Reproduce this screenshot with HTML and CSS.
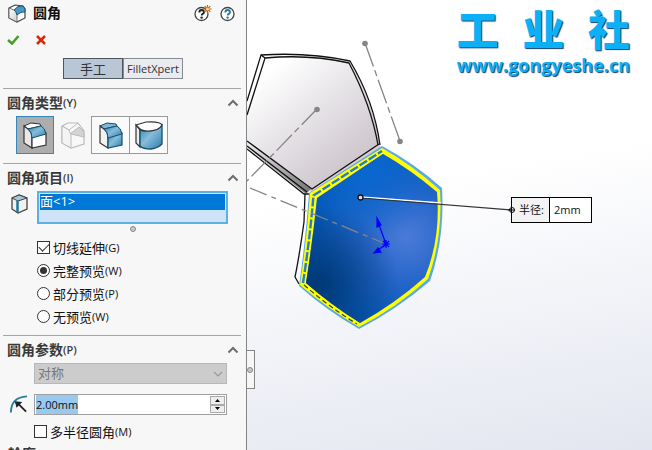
FILE: index.html
```html
<!DOCTYPE html>
<html lang="zh-CN">
<head>
<meta charset="utf-8">
<title>圆角</title>
<link rel="stylesheet" href="styles.css">
</head>
<body>
<svg class="defs" aria-hidden="true">
  <defs>
    <linearGradient id="blue" x1="0" y1="0" x2="1" y2="1"><stop offset="0" stop-color="#2f7fab"/><stop offset=".45" stop-color="#86bddb"/><stop offset="1" stop-color="#2f7ba6"/></linearGradient>
    <linearGradient id="gray" x1="0" y1="0" x2="1" y2="1"><stop offset="0" stop-color="#ffffff"/><stop offset="1" stop-color="#cfcfcf"/></linearGradient>
    <symbol id="chevron" viewBox="0 0 12 8"><path d="M1.500 6.500 6 2l4.500 4.500" fill="none" stroke="#6e6e6e" stroke-width="2"/></symbol>
  </defs>
</svg>
<div class="app">
  <aside class="panel">
    <header class="head">
      <svg class="head-icon" viewBox="0 0 18 19"><path d="M1 4 7 1l8 1 2 3v9l-8 4-8-4z" fill="#fbfbfb" stroke="#444" stroke-width="1.200"/><path d="M1 4l5 2q3 2 3 5v7l-8-4z" fill="url(#gray)" stroke="#555" stroke-width=".8"/><path d="M6 6 10 2.500 15 2l2 3v3q-4-1-8 3-1-4-3-5z" fill="#4a97bf" stroke="#1c5778"/></svg>
      <h1>圆角</h1>
      <button class="plain" aria-label="新增功能"><svg width="19" height="18" viewBox="0 0 19 18"><circle cx="7.500" cy="10" r="6.500" fill="#fff" stroke="#444" stroke-width="1.300"/><path d="M5.300 8.500q0-2.500 2.300-2.500t2.300 2.200q0 1-1.200 1.700-1 .6-1 1.600" fill="none" stroke="#222" stroke-width="1.900"/><circle cx="7.600" cy="13.600" r="1.200" fill="#222"/><path d="M13.500 1v8M9.500 5h8M10.700 2.200l5.600 5.600M16.300 2.200l-5.600 5.600" stroke="#b96610" stroke-width="1.200"/><circle cx="13.500" cy="5" r="1.500" fill="#ffd28a"/></svg></button>
      <button class="plain" aria-label="帮助"><svg width="15" height="18" viewBox="0 0 15 18"><circle cx="7.500" cy="10" r="6.500" fill="#fff" stroke="#444" stroke-width="1.300"/><path d="M5.300 8.500q0-2.500 2.300-2.500t2.300 2.200q0 1-1.200 1.700-1 .6-1 1.600" fill="none" stroke="#237ba8" stroke-width="1.900"/><circle cx="7.600" cy="13.600" r="1.200" fill="#237ba8"/></svg></button>
    </header>
    <div class="confirm">
      <button class="plain" aria-label="确定"><svg width="13" height="10" viewBox="0 0 13 10"><path d="M1 5l4 3.500L11.500 1" fill="none" stroke="#3fa31f" stroke-width="2.600"/></svg></button>
      <button class="plain" aria-label="取消"><svg width="10" height="10" viewBox="0 0 10 10"><path d="M1 1l8 8M9 1 1 9" stroke="#d42a06" stroke-width="2.500"/></svg></button>
    </div>
    <div class="tabs">
      <button class="tab tab-on">手工</button>
      <button class="tab">FilletXpert</button>
    </div>

    <section class="group">
      <h2>圆角类型<small>(Y)</small><svg class="chev"><use href="#chevron"/></svg></h2>
      <div class="types">
        <button class="type type-on" aria-label="恒定大小圆角"><svg viewBox="0 0 24 27"><path d="M1 4 8 1l9 1 1 2-13 3z" fill="#fff" stroke="#333"/><path d="M1 4l4 3q4 3 4 8v11l-8-5z" fill="#e8e8e8" stroke="#333" stroke-width="1.200"/><path d="M9 15l14-4v12L9 26z" fill="#fff" stroke="#333" stroke-width="1.200"/><path d="M5 7l13-3q4 2 5 8L9 16q0-6-4-9z" fill="url(#blue)" stroke="#15506f"/></svg></button>
        <button class="type type-off" aria-label="变量大小圆角" disabled><svg viewBox="0 0 24 27"><path d="M1 4 7 1l10 0 6 8v13L10 26l-9-5z" fill="#f8f8f8" stroke="#bbb" stroke-width="1.200"/><path d="M1 4l7 4 9-7" fill="none" stroke="#bbb"/><path d="M9 12 18 5l5 5v5l-13-3z" fill="#d4d4d4" stroke="#bbb"/><path d="M1 4l7 4 2 5v13l-9-5z" fill="#f3f3f3" stroke="#bbb"/></svg></button>
        <button class="type" aria-label="面圆角"><svg viewBox="0 0 24 27"><path d="M1 4 8 1l9 1 1 2-13 3z" fill="#7db9d6" stroke="#1d4a60"/><path d="M1 4l4 3q4 3 4 8v11l-8-5z" fill="#f2f2f2" stroke="#333" stroke-width="1.200"/><path d="M9 15l14-4v12L9 26z" fill="url(#blue)" stroke="#15506f" stroke-width="1.200"/><path d="M5 7l13-3q4 2 5 8L9 16q0-6-4-9z" fill="url(#blue)" stroke="#15506f"/></svg></button>
        <button class="type" aria-label="完整圆角"><svg class="wide" viewBox="0 0 28 29"><path d="M1 4l4 5v17l-4-4z" fill="#eee" stroke="#333" stroke-width="1.200"/><path d="M5 9q14 3 22-5v19q-4 4-11 5-8 0-11-3z" fill="url(#blue)" stroke="#15506f" stroke-width="1.300"/><path d="M1 4 11 1q14-1 16 3-3 6-14 6-6 0-8-2z" fill="#fff" stroke="#333" stroke-width="1.200"/></svg></button>
      </div>
    </section>

    <section class="group items">
      <h2>圆角项目<small>(I)</small><svg class="chev"><use href="#chevron"/></svg></h2>
      <div class="pick">
        <svg class="pick-icon" viewBox="0 0 18 20"><path d="M1 4 8 1l8 3v11l-9 4-6-4z" fill="#f1f1f1" stroke="#444" stroke-width="1.300"/><path d="M1 4 8 1l8 3-9 3z" fill="#9dccdf" stroke="#444"/><path d="M6.500 7v11" stroke="#1877a4" stroke-width="2.500"/></svg>
        <ul class="list"><li>面&lt;1&gt;</li></ul>
        <i class="grip"></i>
      </div>
      <div class="options">
        <label><input type="checkbox" checked>切线延伸<small>(G)</small></label>
        <label><input type="radio" name="preview" checked>完整预览<small>(W)</small></label>
        <label><input type="radio" name="preview">部分预览<small>(P)</small></label>
        <label><input type="radio" name="preview">无预览<small>(W)</small></label>
      </div>
    </section>

    <section class="group">
      <h2>圆角参数<small>(P)</small><svg class="chev"><use href="#chevron"/></svg></h2>
      <div class="params">
        <div class="select"><select aria-label="圆角方法" disabled><option>对称</option></select><svg viewBox="0 0 10 6"><path d="M1 1l4 4 4-4" fill="none" stroke="#999" stroke-width="1.200"/></svg></div>
        <div class="radius">
          <svg class="radius-icon" viewBox="0 0 20 20"><path d="M2 19Q2 3 19 2" fill="none" stroke="#2d7d9f" stroke-width="2"/><path d="M18 18 9 9" stroke="#222" stroke-width="2"/><path d="M6 7l8 1-6 6z" fill="#222"/></svg>
          <input class="value" type="text" value="2.00mm" aria-label="半径">
          <span class="spin"><button aria-label="增加"><svg viewBox="0 0 5 3"><path d="M0 3 2.500 0 5 3z"/></svg></button><button aria-label="减少"><svg viewBox="0 0 5 3"><path d="M0 0h5L2.500 3z"/></svg></button></span>
        </div>
        <label><input type="checkbox">多半径圆角<small>(M)</small></label>
      </div>
    </section>
    <h2 class="next">轮廓</h2>
  </aside>

  <main class="view">
    <button class="handle" aria-label="折叠面板"><i class="grip"></i></button>
    <svg class="model" width="405" height="450" viewBox="247 0 405 450">
      <defs>
        <linearGradient id="shell" gradientUnits="userSpaceOnUse" x1="265" y1="75" x2="340" y2="170"><stop offset="0" stop-color="#fff"/><stop offset=".5" stop-color="#e6e3e7"/><stop offset="1" stop-color="#cfc8cf"/></linearGradient>
        <linearGradient id="rim" gradientUnits="userSpaceOnUse" x1="247" y1="145" x2="310" y2="190"><stop offset="0" stop-color="#eee"/><stop offset="1" stop-color="#777"/></linearGradient>
        <radialGradient id="face" gradientUnits="userSpaceOnUse" cx="407" cy="237" r="135"><stop offset="0" stop-color="#4b7bd8"/><stop offset=".35" stop-color="#2465c8"/><stop offset=".65" stop-color="#0759b8"/><stop offset="1" stop-color="#024a9c"/></radialGradient>
        <radialGradient id="shade" gradientUnits="userSpaceOnUse" cx="318" cy="284" r="80"><stop offset="0" stop-color="#00356f" stop-opacity=".9"/><stop offset="1" stop-color="#00356f" stop-opacity="0"/></radialGradient>
        <radialGradient id="lift" gradientUnits="userSpaceOnUse" cx="365" cy="165" r="75"><stop offset="0" stop-color="#0968d0"/><stop offset="1" stop-color="#0968d0" stop-opacity="0"/></radialGradient>
        <path id="facet" d="M317 198 383 154Q411 170 437 192 441 238 425 277 396 303 360 323 331 305 306 283 313 238 317 198z"/>
      </defs>
      <path d="M247 105 261 56Q309 53 350 61 373 100 380 146L311 191 247 143z" fill="url(#shell)"/>
      <path d="M247 141 311 189 306 194 247 148z" fill="url(#rim)"/>
      <path d="M311 189 380 145 381 149 309 194z" fill="#d8ccd3"/>
      <g fill="none" stroke="#111" stroke-width="1.300">
        <path d="M247 101 261 55Q309 52 350 61 374 101 380 145"/>
        <path d="M247 115 265 58Q309 54 349 63 371 105 378 145"/>
        <path d="M261 55 265 58M379 144 312 189 247 141M247 146 307 192M247 149 304 194H309"/>
        <path d="M305 194 304 222Q299 258 295 277L299 284"/>
      </g>
      <path d="M309 193 382 146Q414 163 442 188 445 238 430 281 396 310 359 329 326 310 299 286 306 238 309 193z" fill="#57a8ef"/>
      <path d="M310 193 382 148Q412 165 440 190 443 238 428 279 396 308 359 327 327 308 300 285 307 238 310 193z" fill="#ff0"/>
      <use href="#facet" fill="url(#face)"/>
      <use href="#facet" fill="url(#shade)"/>
      <use href="#facet" fill="url(#lift)"/>
      <path d="M303 283Q310 238 313.500 195.500L382 151" fill="none" stroke="#2b7ccb" stroke-width="2.400" stroke-dasharray="9 2"/>
      <path d="M304 285Q328 306 357 324" fill="none" stroke="#31472d" stroke-width="1.200" stroke-dasharray="5 3"/>
      <g fill="none" stroke="#858585" stroke-width="1.300">
        <path d="M317 109 247 181" stroke-dasharray="22 4 6 4"/>
        <path d="M365 43 400 141" stroke-dasharray="25 4 6 4"/>
        <path d="M250 188 386 244" stroke-dasharray="18 5 5 5"/>
      </g>
      <g fill="#858585"><circle cx="317" cy="109.500" r="2.800"/><circle cx="365" cy="43.500" r="2.800"/><circle cx="400" cy="141.500" r="2.800"/></g>
      <path d="M361 197 441 203" stroke="#fff" stroke-width="1.500"/>
      <path d="M361 198 512 210" stroke="#333" stroke-width="1.200"/>
      <circle cx="360.500" cy="197.500" r="2.500" fill="#ddd" stroke="#111" stroke-width="1.300"/>
      <g stroke="#00f" fill="#00f" stroke-width="1.200"><path d="M386 244 378 222M386 244 377 251M386 240v8M382 244h8M383 241l6 6M389 241l-6 6"/><path d="M377 218 381 225 377 227zM374 253 381 252 378 248z"/></g>
    </svg>
    <div class="watermark"><b><i>工</i><i>业</i><i>社</i></b><span>www.gongyeshe.cn</span></div>
    <div class="callout"><svg viewBox="0 0 8 8"><path d="M0 4h7" stroke="#111"/><circle cx="4" cy="4" r="2.500" fill="none" stroke="#111"/></svg><span>半径:</span><span>2mm</span></div>
  </main>
</div>
<script>
const value = document.querySelector('.value');
value.focus();
value.select();
</script>
</body>
</html>
```
FILE: styles.css
```css
* { box-sizing: border-box; }
body {
  margin: 0;
  font: 13px/20px "Open Sans", "Noto Sans CJK SC", sans-serif;
  color: #111;
}
.defs { position: absolute; width: 0; height: 0; }
.app { display: flex; height: 100vh; overflow: hidden; }
.panel {
  flex: 0 0 247px;
  overflow: hidden;
  background: #f7f7f7;
  border-right: 1px solid #858585;
}
button { font: inherit; padding: 0; }
svg { display: block; }
small { font-size: 11px; }
.plain { border: 0; background: none; }
.head { display: flex; align-items: center; gap: 7px; height: 26px; padding: 0 11px 0 8px; }
.head-icon { width: 18px; height: 19px; }
h1 { flex: 1; margin: 0; font-size: 14px; line-height: 20px; }
.confirm { display: flex; align-items: center; gap: 16px; height: 32px; padding: 0 7px 4px; }
.tabs { display: grid; grid-template-columns: 1fr 1fr; width: 120px; height: 21px; margin: 0 auto 9px 63px; }
.tab {
  border: 1px solid #858b91;
  background: #e9ebf0;
  font-size: 11px;
  line-height: 18px;
  color: #333;
  white-space: nowrap;
}
.tab-on { background: #b8c6d6; border-color: #4f555c; font-size: 13px; }
.group { margin: 0 5px 0 3px; border-top: 1px solid #a5a5a5; }
h2 {
  display: flex;
  align-items: center;
  height: 27px;
  margin: 0;
  padding: 0 2px 0 4px;
  font-size: 14px;
  line-height: 20px;
  color: #3a3a3a;
}
h2 small { font-weight: 600; }
.chev { width: 12px; height: 8px; margin-left: auto; }
.types { display: flex; padding: 0 0 9px 13px; }
.type {
  display: grid;
  place-items: center;
  width: 38px;
  height: 38px;
  border: 1px solid #999;
  background: #fafafa;
}
.type svg { width: 24px; height: 27px; }
.type .wide { width: 28px; height: 29px; }
.type-on { border-color: #3388bd; background: #adadad; }
.type-off { border-color: transparent; background: none; }
.type + .type:not(.type-off) { margin-left: -1px; width: 39px; }
.pick {
  display: grid;
  grid-template-columns: 18px 1fr;
  column-gap: 8px;
  justify-items: center;
  padding: 0 13px 0 8px;
}
.pick-icon { width: 18px; height: 20px; margin-top: 3px; }
.list {
  justify-self: stretch;
  height: 33px;
  margin: 0;
  padding: 1px;
  list-style: none;
  background: #cfe3f8;
  border: 2px solid #5cb0e4;
}
.list li { height: 16px; line-height: 15px; color: #fff; background: #0078d7; }
.grip {
  width: 6px;
  height: 6px;
  border: 1px solid #888;
  border-radius: 50%;
  background: #c8c8c8;
}
.pick .grip { grid-column: 2; margin-top: 2px; }
.options { padding: 4px 0 7px 34px; }
label { display: flex; align-items: center; height: 23px; }
input[type="checkbox"], input[type="radio"] {
  display: grid;
  place-items: center;
  appearance: none;
  width: 13px;
  height: 13px;
  margin: 0 3px 0 0;
  border: 1px solid #333;
  background: #fff;
}
input[type="radio"] { border-radius: 50%; }
input[type="radio"]:checked::before { content: ""; width: 7px; height: 7px; border-radius: 50%; background: #333; }
input[type="checkbox"]:checked::before {
  content: "";
  width: 9px;
  height: 5px;
  margin-bottom: 3px;
  border: solid #333;
  border-width: 0 0 1px 1px;
  transform: rotate(-45deg);
}
.params { display: flex; flex-direction: column; padding: 0 14px 0 31px; }
.select { display: grid; align-items: center; margin-bottom: 10px; }
.select > * { grid-area: 1 / 1; }
select {
  appearance: none;
  width: 100%;
  height: 21px;
  padding: 0 3px;
  border: 1px solid #b8b8b8;
  border-radius: 0;
  background: #ccc;
  color: #777;
  opacity: 1;
  font: inherit;
  line-height: 19px;
}
.select svg { justify-self: end; width: 10px; height: 6px; margin-right: 4px; }
.radius { display: flex; height: 21px; margin: 0 0 5px -25px; }
.radius-icon { flex: none; width: 19px; height: 20px; margin-right: 6px; }
.value {
  flex: 1;
  min-width: 0;
  padding: 0 1px;
  border: 1px solid #a0a0a0;
  border-right: 0;
  border-radius: 0;
  outline: 0;
  background: #fff;
  font: 11px/19px "Open Sans", sans-serif;
}
.value::selection { background: #99c9ef; color: #111; }
.spin {
  display: flex;
  flex-direction: column;
  width: 18px;
  padding: 1px;
  border: 1px solid #a0a0a0;
  border-left: 0;
  background: #fff;
}
.spin button { display: grid; place-items: center; flex: 1; min-height: 0; border: 1px solid #aaa; background: #eee; }
.spin svg { width: 5px; height: 3px; }
.next { height: 22px; padding-left: 8px; }
.view {
  position: relative;
  flex: 1;
  overflow: hidden;
  background: linear-gradient(170deg, #fff 40%, #e3e6f0);
}
.model { position: absolute; left: 0; top: 0; }
.handle {
  position: absolute;
  z-index: 1;
  left: -1px;
  top: 350px;
  display: grid;
  place-items: center;
  width: 9px;
  height: 39px;
  border: 1px solid #858585;
  border-left: 0;
  background: #f7f7f7;
}
.watermark {
  position: absolute;
  top: 0;
  right: 22px;
  display: flex;
  flex-direction: column;
  align-items: stretch;
  color: #0cb0f7;
  text-shadow: 1px 1px 1px #123f69;
}
.watermark b { display: flex; justify-content: space-between; font: 900 42px/56px "Noto Sans CJK SC", sans-serif; }
.watermark i { font-style: normal; }
.watermark span { font: bold 18px/18px "Open Sans", sans-serif; }
.callout {
  position: absolute;
  left: 264px;
  top: 197px;
  display: flex;
  height: 26px;
  border: 1px solid #000;
  background: #fff;
  font-size: 11px;
  line-height: 24px;
}
.callout svg { position: absolute; left: -4px; top: 8px; width: 8px; height: 8px; }
.callout span { width: 41px; padding-left: 4px; }
.callout svg + span { width: 38px; padding-left: 7px; border-right: 1px solid #000; background: #f3f3f3; }
.callout svg { z-index: 1; }
```
